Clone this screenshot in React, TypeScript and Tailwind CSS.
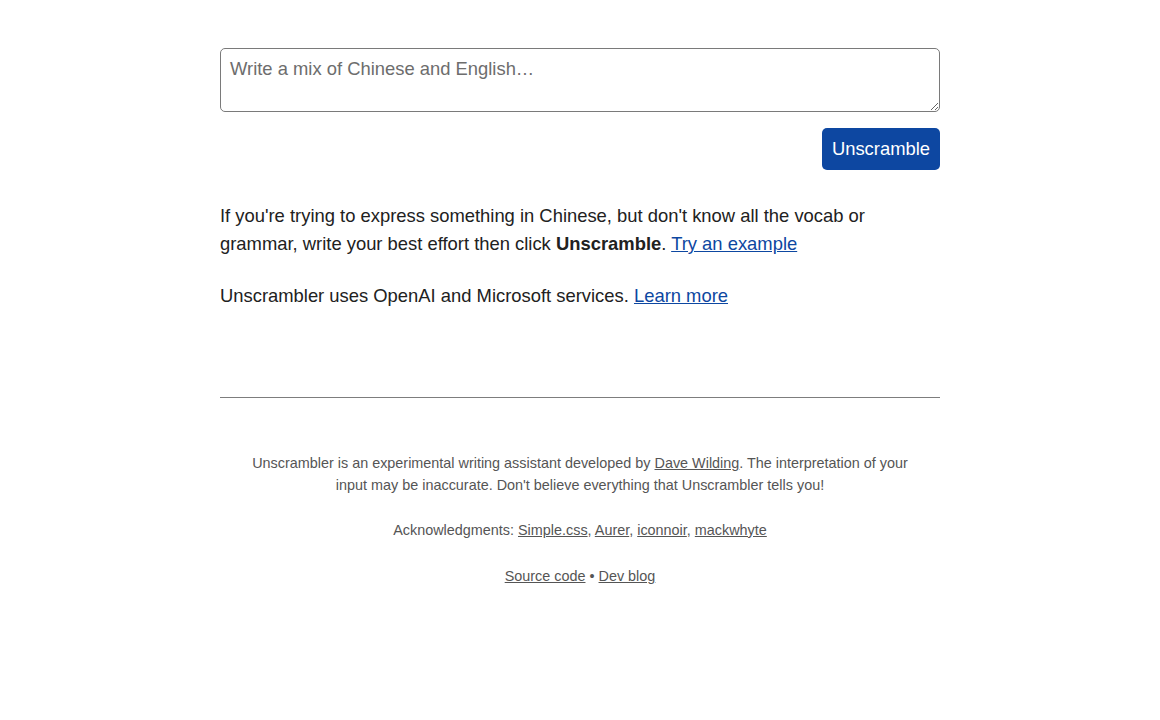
import { useState } from "react";

const App = () => {
  const [text, setText] = useState("");

  return (
    <div className="min-h-screen bg-white font-['Liberation_Sans',Arial,sans-serif] text-[18.4px] text-[#212121]">
      <main className="mx-auto flex w-[720px] flex-col pt-12">
        <textarea
          value={text}
          onChange={(e) => setText(e.target.value)}
          placeholder="Write a mix of Chinese and English…"
          className="h-[64px] w-full rounded-[5px] border border-[#7a7a7a] px-[9px] py-[6px] text-[18.4px] leading-[27px] text-[#212121] outline-none placeholder:text-[#6d6d6d]"
        />
        <button className="mt-4 h-[42px] self-end rounded-[5px] bg-[#0d47a1] px-[10px] text-[18.4px] text-white">
          Unscramble
        </button>
        <p className="mt-8 leading-[28px]">
          If you're trying to express something in Chinese, but don't know all
          the vocab or grammar, write your best effort then click{" "}
          <b>Unscramble</b>.{" "}
          <a href="#" className="text-[#0d47a1] underline">
            Try an example
          </a>
        </p>
        <p className="mt-6 leading-[28px]">
          Unscrambler uses OpenAI and Microsoft services.{" "}
          <a href="#" className="text-[#0d47a1] underline">
            Learn more
          </a>
        </p>
        <hr className="mt-[87px] border-t border-[#7d7d7d]" />
        <footer className="mt-[54px] px-[30px] text-center text-[14.4px] leading-[22px] text-[#555]">
          <p>
            Unscrambler is an experimental writing assistant developed by{" "}
            <a href="#" className="underline">
              Dave Wilding
            </a>
            . The interpretation of your input may be inaccurate. Don't believe
            everything that Unscrambler tells you!
          </p>
          <p className="mt-[23px]">
            Acknowledgments:{" "}
            <a href="#" className="underline">Simple.css</a>,{" "}
            <a href="#" className="underline">Aurer</a>,{" "}
            <a href="#" className="underline">iconnoir</a>,{" "}
            <a href="#" className="underline">mackwhyte</a>
          </p>
          <p className="mt-6">
            <a href="#" className="underline">Source code</a> •{" "}
            <a href="#" className="underline">Dev blog</a>
          </p>
        </footer>
      </main>
    </div>
  );
};

export default App;
